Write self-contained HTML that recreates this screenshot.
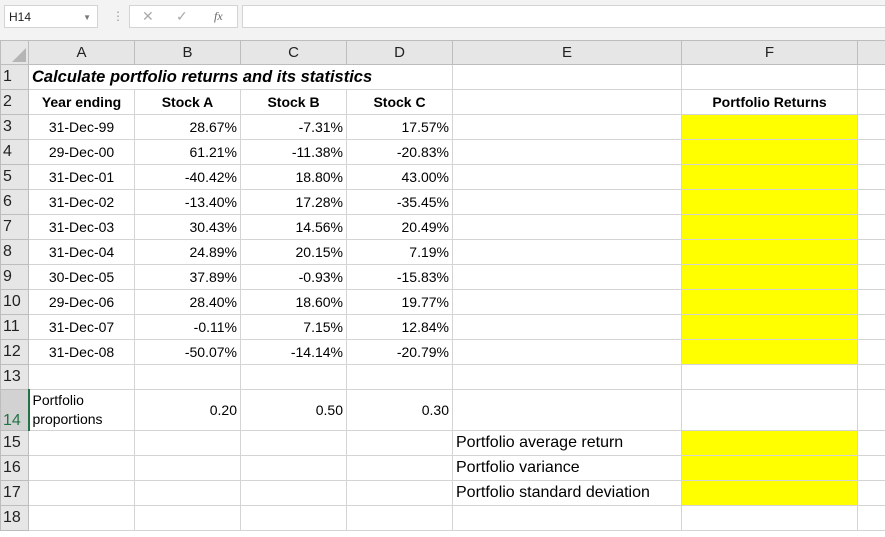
<!DOCTYPE html>
<html><head><style>
body{margin:0;width:885px;height:537px;overflow:hidden;background:#fff;font-family:"Liberation Sans",Arial,sans-serif;position:relative}
.tb{position:absolute;left:0;top:0;width:885px;height:40px;background:#f3f3f3}
.nb{position:absolute;left:4px;top:5px;width:94px;height:23px;background:#fff;border:1px solid #d4d4d4;font-size:12px;line-height:23px;padding-left:4px;box-sizing:border-box;color:#222}
.fb{position:absolute;left:129px;top:5px;width:109px;height:23px;background:#fff;border:1px solid #d4d4d4;box-sizing:border-box}
.fi{position:absolute;left:242px;top:5px;width:650px;height:23px;background:#fff;border:1px solid #d4d4d4;box-sizing:border-box}
table{position:absolute;left:0;top:40px;border-collapse:collapse;table-layout:fixed;width:897px}
td{border:1px solid #d4d4d4;padding:0 3px;font-size:14px;white-space:nowrap;overflow:hidden;color:#000}
.h{background:#e6e6e6;text-align:center;font-size:15px;color:#222;border-color:#bdbdbd}
.r{text-align:right}.c{text-align:center}.b{font-weight:bold}
.y{background:#ffff00}
.rh{background:#e6e6e6;text-align:left;padding-left:2px;font-size:16px;color:#222;border-color:#bdbdbd}
.e{font-size:16px}
</style></head><body>
<div class="tb">
<div class="nb">H14<span style="position:absolute;right:6px;top:0;font-size:8px;color:#777">▼</span></div>
<div style="position:absolute;left:112px;top:9px;color:#999;font-size:12px">⋮</div>
<div class="fb"><span style="position:absolute;left:12px;top:2px;color:#aaa;font-size:14px">✕</span><span style="position:absolute;left:46px;top:2px;color:#aaa;font-size:14px">✓</span><span style="position:absolute;left:84px;top:3px;color:#666;font-size:12px;font-style:italic;font-family:'Liberation Serif',serif">fx</span></div>
<div class="fi"></div>
</div>
<table>
<colgroup><col style="width:28px"><col style="width:106px"><col style="width:106px"><col style="width:106px"><col style="width:106px"><col style="width:229px"><col style="width:176px"><col style="width:40px"></colgroup>
<tr style="height:24px"><td class="h" style="position:relative"><div style="position:absolute;right:2px;bottom:2px;width:0;height:0;border-left:14px solid transparent;border-bottom:14px solid #b5b5b5"></div></td><td class="h">A</td><td class="h">B</td><td class="h">C</td><td class="h">D</td><td class="h">E</td><td class="h">F</td><td class="h"></td></tr>
<tr style="height:25px"><td class="rh">1</td><td colspan="4" style="font-weight:bold;font-style:italic;font-size:16.5px;overflow:visible">Calculate portfolio returns and its statistics</td><td></td><td></td><td></td></tr>
<tr style="height:25px"><td class="rh">2</td><td class="c b">Year ending</td><td class="c b">Stock A</td><td class="c b">Stock B</td><td class="c b">Stock C</td><td></td><td class="c b">Portfolio Returns</td><td></td></tr>
<tr style="height:25px"><td class="rh">3</td><td class="c">31-Dec-99</td><td class="r">28.67%</td><td class="r">-7.31%</td><td class="r">17.57%</td><td></td><td class="y"></td><td></td></tr>
<tr style="height:25px"><td class="rh">4</td><td class="c">29-Dec-00</td><td class="r">61.21%</td><td class="r">-11.38%</td><td class="r">-20.83%</td><td></td><td class="y"></td><td></td></tr>
<tr style="height:25px"><td class="rh">5</td><td class="c">31-Dec-01</td><td class="r">-40.42%</td><td class="r">18.80%</td><td class="r">43.00%</td><td></td><td class="y"></td><td></td></tr>
<tr style="height:25px"><td class="rh">6</td><td class="c">31-Dec-02</td><td class="r">-13.40%</td><td class="r">17.28%</td><td class="r">-35.45%</td><td></td><td class="y"></td><td></td></tr>
<tr style="height:25px"><td class="rh">7</td><td class="c">31-Dec-03</td><td class="r">30.43%</td><td class="r">14.56%</td><td class="r">20.49%</td><td></td><td class="y"></td><td></td></tr>
<tr style="height:25px"><td class="rh">8</td><td class="c">31-Dec-04</td><td class="r">24.89%</td><td class="r">20.15%</td><td class="r">7.19%</td><td></td><td class="y"></td><td></td></tr>
<tr style="height:25px"><td class="rh">9</td><td class="c">30-Dec-05</td><td class="r">37.89%</td><td class="r">-0.93%</td><td class="r">-15.83%</td><td></td><td class="y"></td><td></td></tr>
<tr style="height:25px"><td class="rh">10</td><td class="c">29-Dec-06</td><td class="r">28.40%</td><td class="r">18.60%</td><td class="r">19.77%</td><td></td><td class="y"></td><td></td></tr>
<tr style="height:25px"><td class="rh">11</td><td class="c">31-Dec-07</td><td class="r">-0.11%</td><td class="r">7.15%</td><td class="r">12.84%</td><td></td><td class="y"></td><td></td></tr>
<tr style="height:25px"><td class="rh">12</td><td class="c">31-Dec-08</td><td class="r">-50.07%</td><td class="r">-14.14%</td><td class="r">-20.79%</td><td></td><td class="y"></td><td></td></tr>
<tr style="height:25px"><td class="rh">13</td><td></td><td></td><td></td><td></td><td></td><td></td><td></td></tr>
<tr style="height:41px"><td class="rh" style="vertical-align:bottom;background:#d2d2d2;color:#217346;border-right:2px solid #217346">14</td><td style="line-height:19px;font-size:14px">Portfolio<br>proportions</td><td class="r">0.20</td><td class="r">0.50</td><td class="r">0.30</td><td></td><td></td><td></td></tr>
<tr style="height:25px"><td class="rh">15</td><td></td><td></td><td></td><td></td><td class="e">Portfolio average return</td><td class="y"></td><td></td></tr>
<tr style="height:25px"><td class="rh">16</td><td></td><td></td><td></td><td></td><td class="e">Portfolio variance</td><td class="y"></td><td></td></tr>
<tr style="height:25px"><td class="rh">17</td><td></td><td></td><td></td><td></td><td class="e">Portfolio standard deviation</td><td class="y"></td><td></td></tr>
<tr style="height:25px"><td class="rh">18</td><td></td><td></td><td></td><td></td><td></td><td></td><td></td></tr>
</table>
</body></html>
